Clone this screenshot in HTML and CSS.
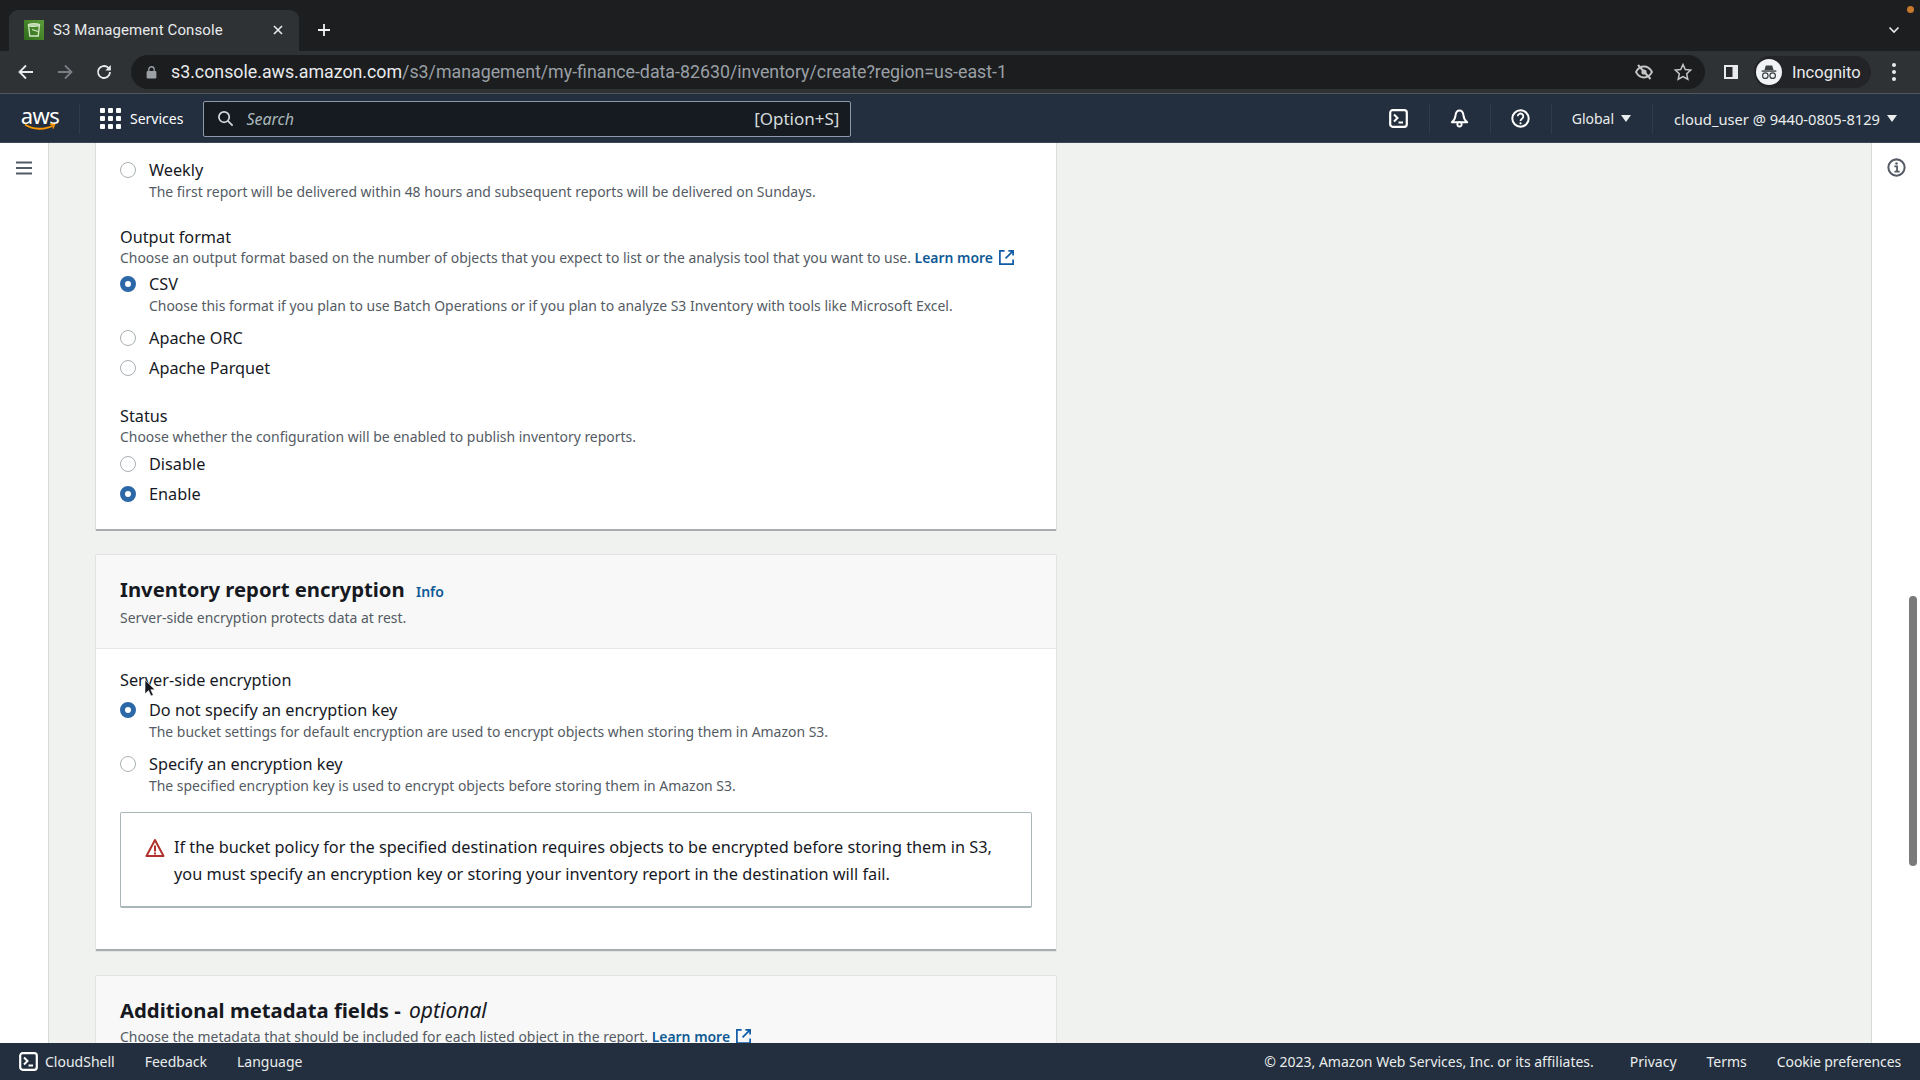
FILE: index.html
```html
<!DOCTYPE html>
<html lang="en">
<head>
<meta charset="utf-8">
<title>S3 Management Console</title>
<link rel="stylesheet" href="styles.css">
</head>
<body>
<div class="tabstrip">
  <div class="tab">
    <svg class="favicon" viewBox="0 0 20 20"><defs><linearGradient id="fav" x1="0" y1="1" x2="1" y2="0"><stop offset="0" stop-color="#2f6b1c"/><stop offset="1" stop-color="#5c9c38"/></linearGradient></defs><rect width="20" height="20" fill="url(#fav)"/><path d="M4.500 5h11l-1.300 11H5.800z" fill="none" stroke="#d5e8c6" stroke-width="1.300"/><ellipse cx="10" cy="5" rx="5.500" ry="1.400" fill="none" stroke="#d5e8c6" stroke-width="1.200"/><path d="M8 9.500l6 2" stroke="#d5e8c6" stroke-width="1.200"/></svg>
    <span class="tab-title">S3 Management Console</span>
    <svg class="tab-close" viewBox="0 0 12 12"><path d="M2 2l8 8M10 2l-8 8" stroke="#e8eaed" stroke-width="1.600"/></svg>
  </div>
  <svg class="new-tab" viewBox="0 0 14 14"><path d="M7 1v12M1 7h12" stroke="#f1f3f4" stroke-width="1.800"/></svg>
  <div class="spacer"></div>
  <svg class="tab-list" viewBox="0 0 12 8"><path d="M1.500 1.500L6 6l4.500-4.500" fill="none" stroke="#e8eaed" stroke-width="1.600"/></svg>
  <span class="rec-dot"></span>
</div>
<div class="toolbar">
  <svg class="nav-icon" viewBox="0 0 20 20"><path d="M17 10H4M10 3.500L3.500 10l6.500 6.500" fill="none" stroke="#e8eaed" stroke-width="1.800"/></svg>
  <svg class="nav-icon" viewBox="0 0 20 20"><path d="M3 10h13M10 3.500l6.500 6.500-6.500 6.500" fill="none" stroke="#7b7e82" stroke-width="1.800"/></svg>
  <svg class="nav-icon" viewBox="0 0 20 20"><path d="M16 10a6 6 0 1 1-1.800-4.300L16 7.500" fill="none" stroke="#e8eaed" stroke-width="1.800"/><path d="M16.800 3v5.500h-5.500z" fill="#e8eaed"/></svg>
  <div class="omnibox">
    <svg class="lock" viewBox="0 0 10 12"><rect x="0.500" y="4.500" width="9" height="7" rx="1" fill="#9aa0a6"/><path d="M2.500 5V3.200a2.500 2.500 0 0 1 5 0V5" fill="none" stroke="#9aa0a6" stroke-width="1.200"/></svg>
    <span class="url"><span class="url-host">s3.console.aws.amazon.com</span>/s3/management/my-finance-data-82630/inventory/create?region=us-east-1</span>
    <div class="spacer"></div>
    <svg class="omni-icon" viewBox="0 0 20 20"><path d="M2 10s3-5.500 8-5.500S18 10 18 10s-3 5.500-8 5.500S2 10 2 10z" fill="none" stroke="#c4c7c5" stroke-width="1.800"/><circle cx="10" cy="10" r="2.600" fill="#c4c7c5"/><path d="M4 3l12.500 14" stroke="#c4c7c5" stroke-width="2"/></svg>
    <svg class="omni-icon" viewBox="0 0 20 20"><path d="M10 2.500l2.300 5 5.400.6-4 3.700 1.100 5.400L10 14.500l-4.800 2.700 1.100-5.400-4-3.700 5.400-.6z" fill="none" stroke="#c4c7c5" stroke-width="1.500"/></svg>
  </div>
  <svg class="panel-icon" viewBox="0 0 16 16"><rect x="1" y="1" width="14" height="14" fill="#e8eaed"/><rect x="3" y="3" width="6.500" height="10" fill="#292a2d"/></svg>
  <div class="profile">
    <span class="avatar"><svg viewBox="0 0 24 24"><path d="M7 10l1.500-5h7L17 10z" fill="#3c4043"/><path d="M4 11h16" stroke="#3c4043" stroke-width="1.500"/><circle cx="8" cy="16" r="3" fill="none" stroke="#3c4043" stroke-width="1.300"/><circle cx="16" cy="16" r="3" fill="none" stroke="#3c4043" stroke-width="1.300"/></svg></span>
    <span class="profile-name">Incognito</span>
  </div>
  <div class="kebab"><i></i><i></i><i></i></div>
</div>
<header class="aws-header">
  <div class="aws-logo">
    <span class="aws-word">aws</span>
    <svg class="smile" viewBox="0 0 32 8"><path d="M1 1.500c8 5.500 20 5.500 28 1" fill="none" stroke="#ff9900" stroke-width="1.800"/><path d="M26 1l4.500.5-1.500 4" fill="none" stroke="#ff9900" stroke-width="1.400"/></svg>
  </div>
  <span class="hdr-sep logo-sep"></span>
  <div class="services">
    <div class="grid-icon"><i></i><i></i><i></i><i></i><i></i><i></i><i></i><i></i><i></i></div>
    <span>Services</span>
  </div>
  <div class="search">
    <svg class="search-icon" viewBox="0 0 18 18"><circle cx="7.500" cy="7.500" r="5.500" fill="none" stroke="#d5dbdb" stroke-width="1.800"/><path d="M11.500 11.500l5 5" stroke="#d5dbdb" stroke-width="1.800"/></svg>
    <span class="search-ph">Search</span>
    <div class="spacer"></div>
    <span class="search-key">[Option+S]</span>
  </div>
  <div class="spacer"></div>
  <div class="hdr-icon"><svg class="term" viewBox="0 0 19 19"><rect x="1.200" y="1.200" width="16.600" height="16.600" rx="2.500" fill="none" stroke="#fff" stroke-width="2.200"/><path d="M5 5.500l3.500 3.500L5 12.500M9.500 13.500h4.500" fill="none" stroke="#fff" stroke-width="2"/></svg></div>
  <span class="hdr-sep"></span>
  <div class="hdr-icon"><svg class="bell" viewBox="0 0 19 19"><path d="M9.500 1.500C7 1.500 5.800 4 5.500 6.500 5.200 9.500 4 11.500 1.800 13.200h15.400C15 11.500 13.800 9.500 13.500 6.500 13.200 4 12 1.500 9.500 1.500z" fill="none" stroke="#fff" stroke-width="2" stroke-linejoin="round"/><circle cx="9.500" cy="15.300" r="2.200" fill="none" stroke="#fff" stroke-width="1.800"/></svg></div>
  <span class="hdr-sep"></span>
  <div class="hdr-icon"><svg class="help" viewBox="0 0 19 19"><circle cx="9.500" cy="9.500" r="8.200" fill="none" stroke="#fff" stroke-width="2"/><path d="M6.700 7.300a2.800 2.800 0 1 1 4.300 2.400c-1 .7-1.500 1.200-1.500 2.300" fill="none" stroke="#fff" stroke-width="1.800"/><circle cx="9.500" cy="14.300" r="1.100" fill="#fff"/></svg></div>
  <span class="hdr-sep"></span>
  <div class="hdr-menu region"><span>Global</span><i class="caret"></i></div>
  <span class="hdr-sep"></span>
  <div class="hdr-menu account"><span>cloud_user @ 9440-0805-8129</span><i class="caret"></i></div>
</header>
<div class="app">
  <aside class="left-rail">
    <svg class="hamburger" viewBox="0 0 18 14"><path d="M1 1.500h16M1 7h16M1 12.500h16" stroke="#545b64" stroke-width="2"/></svg>
  </aside>
  <main class="main">
    <section class="card card-first">
      <div class="card-body">
        <div class="option">
          <span class="radio"></span>
          <div><div class="opt-label">Weekly</div><div class="opt-desc">The first report will be delivered within 48 hours and subsequent reports will be delivered on Sundays.</div></div>
        </div>
        <div class="field field-format">
          <div class="field-label">Output format</div>
          <div class="field-desc">Choose an output format based on the number of objects that you expect to list or the analysis tool that you want to use. <a class="link">Learn more</a><svg class="ext" viewBox="0 0 18 18"><path d="M7 2H2v14h14v-5M11 2h5v5M16 2L8 10" fill="none" stroke="#0f5aa5" stroke-width="1.800"/></svg></div>
          <div class="option opt-first"><span class="radio on"></span><div><div class="opt-label">CSV</div><div class="opt-desc">Choose this format if you plan to use Batch Operations or if you plan to analyze S3 Inventory with tools like Microsoft Excel.</div></div></div>
          <div class="option opt-gap"><span class="radio"></span><div class="opt-label">Apache ORC</div></div>
          <div class="option opt-tight"><span class="radio"></span><div class="opt-label">Apache Parquet</div></div>
        </div>
        <div class="field field-status">
          <div class="field-label">Status</div>
          <div class="field-desc">Choose whether the configuration will be enabled to publish inventory reports.</div>
          <div class="option opt-first2"><span class="radio"></span><div class="opt-label">Disable</div></div>
          <div class="option opt-tight"><span class="radio on"></span><div class="opt-label">Enable</div></div>
        </div>
      </div>
    </section>
    <section class="card">
      <div class="card-head">
        <h2 class="card-title">Inventory report encryption <a class="link info">Info</a></h2>
        <p class="card-desc">Server-side encryption protects data at rest.</p>
      </div>
      <div class="card-body card-body-enc">
        <div class="field-label">Server-side encryption</div>
        <div class="option opt-after-label"><span class="radio on"></span><div><div class="opt-label">Do not specify an encryption key</div><div class="opt-desc">The bucket settings for default encryption are used to encrypt objects when storing them in Amazon S3.</div></div></div>
        <div class="option opt-gap2"><span class="radio"></span><div><div class="opt-label">Specify an encryption key</div><div class="opt-desc">The specified encryption key is used to encrypt objects before storing them in Amazon S3.</div></div></div>
        <div class="alert">
          <svg class="warn" viewBox="0 0 20 20"><path d="M10 2L1.500 18h17z" fill="none" stroke="#b0312b" stroke-width="2" stroke-linejoin="round"/><path d="M10 7.500v6M10 14.500v2" stroke="#b0312b" stroke-width="2"/></svg>
          <p class="alert-text">If the bucket policy for the specified destination requires objects to be encrypted before storing them in S3, you must specify an encryption key or storing your inventory report in the destination will fail.</p>
        </div>
      </div>
    </section>
    <section class="card">
      <div class="card-head">
        <h2 class="card-title">Additional metadata fields - <em class="optional">optional</em></h2>
        <p class="card-desc card-desc-long">Choose the metadata that should be included for each listed object in the report. <a class="link">Learn more</a><svg class="ext" viewBox="0 0 18 18"><path d="M7 2H2v14h14v-5M11 2h5v5M16 2L8 10" fill="none" stroke="#0f5aa5" stroke-width="1.800"/></svg></p>
      </div>
    </section>
  </main>
  <aside class="right-rail">
    <svg class="info-icon" viewBox="0 0 18 18"><circle cx="9" cy="9" r="7.700" fill="none" stroke="#545b64" stroke-width="1.900"/><path d="M7 8h2.500v4.500M7 13h5" fill="none" stroke="#545b64" stroke-width="1.700"/><circle cx="9" cy="5.300" r="1.200" fill="#545b64"/></svg>
    <div class="scroll-thumb"></div>
  </aside>
</div>
<footer class="aws-footer">
  <svg class="term foot-term" viewBox="0 0 19 19"><rect x="1.200" y="1.200" width="16.600" height="16.600" rx="2.500" fill="none" stroke="#fff" stroke-width="2.200"/><path d="M5 5.500l3.500 3.500L5 12.500M9.500 13.500h4.500" fill="none" stroke="#fff" stroke-width="2"/></svg>
  <span class="foot-shell">CloudShell</span>
  <span class="foot-item">Feedback</span>
  <span class="foot-item">Language</span>
  <div class="spacer"></div>
  <span>© 2023, Amazon Web Services, Inc. or its affiliates.</span>
  <span class="foot-right foot-privacy">Privacy</span>
  <span class="foot-right">Terms</span>
  <span class="foot-right foot-cookie">Cookie preferences</span>
</footer>
<svg class="cursor" viewBox="0 0 12 18"><path d="M1 1v14l3.500-3.500 2.500 5.500 2.300-1-2.500-5.300H11z" fill="#16191f" stroke="#fff" stroke-width="0.600"/></svg>
</body>
</html>
```

FILE: styles.css
```css
* { box-sizing: border-box; }
html, body { margin: 0; height: 100%; overflow: hidden; }
body {
  width: 1920px; height: 1080px;
  display: flex; flex-direction: column;
  font-family: "Noto Sans", "Open Sans", sans-serif;
  color: #16191f;
  background: #f0f2f0;
  position: relative;
}
.spacer { flex: 1; }

/* Browser chrome */
.tabstrip {
  height: 51px; flex: none;
  background: #1d1e20;
  display: flex; align-items: flex-end;
  padding-left: 9px;
  position: relative;
}
.tab {
  width: 290px; height: 41px;
  background: #2f3234;
  border-radius: 9px 9px 0 0;
  display: flex; align-items: center;
  padding: 0 15px 2px 15px;
}
.favicon { width: 20px; height: 20px; flex: none; }
.tab-title { margin-left: 9px; font: 15px "Roboto", sans-serif; color: #e8eaed; letter-spacing: .1px; }
.tab-close { width: 12px; height: 12px; margin-left: auto; }
.new-tab { width: 14px; height: 14px; margin: 0 0 14px 18px; }
.tab-list { width: 12px; height: 8px; margin: 0 20px 17px 0; }
.rec-dot { position: absolute; top: 6px; right: 6px; width: 7px; height: 7px; border-radius: 50%; background: #c9792b; }
.toolbar {
  height: 43px; flex: none;
  background: #2f3234;
  border-bottom: 1px solid #55585a;
  display: flex; align-items: center;
  padding-left: 16px;
}
.nav-icon { width: 20px; height: 20px; margin-right: 19px; flex: none; }
.omnibox {
  width: 1574px; height: 34px;
  margin-left: -2px;
  background: #1c1d1f;
  border-radius: 17px;
  display: flex; align-items: center;
  padding: 0 12px 0 15px;
}
.lock { width: 11px; height: 13px; flex: none; }
.url { margin-left: 14px; padding-bottom: 1px; font: 17.800px "Roboto", sans-serif; color: #9aa0a6; white-space: nowrap; }
.url-host { color: #e8eaed; }
.omni-icon { width: 20px; height: 20px; margin-left: 19px; flex: none; }
.panel-icon { width: 16px; height: 16px; margin-left: 18px; flex: none; }
.profile {
  height: 32px; width: 117px;
  margin-left: 15px;
  background: #232427;
  border-radius: 16px;
  display: flex; align-items: center;
  padding-left: 2px;
}
.avatar { width: 26px; height: 26px; border-radius: 50%; background: #f1f3f4; display: flex; align-items: center; justify-content: center; }
.avatar svg { width: 22px; height: 22px; }
.profile-name { margin-left: 10px; font: 16.500px "Roboto", sans-serif; color: #e8eaed; }
.kebab { margin-left: 21px; display: flex; flex-direction: column; gap: 3px; }
.kebab i { width: 4px; height: 4px; border-radius: 50%; background: #e8eaed; display: block; }

/* AWS header */
.aws-header {
  height: 49px; flex: none;
  background: #232f3e;
  color: #fff;
  display: flex; align-items: center;
  padding: 1px 23px 0 21px;
  font-size: 14px;
  border-bottom: 1px solid #3c4654;
}
.aws-logo { width: 38px; display: flex; flex-direction: column; align-items: center; }
.aws-word { font: 22px/18px "Noto Sans", sans-serif; color: #fff; letter-spacing: -.5px; }
.smile { width: 32px; height: 8px; margin-top: -1px; }
.hdr-sep { width: 1px; height: 30px; background: #2f3b4b; flex: none; }
.logo-sep { margin-left: 20px; }
.services { display: flex; align-items: center; margin-left: 20px; gap: 9px; }
.grid-icon { display: grid; grid-template-columns: repeat(3, 5px); grid-auto-rows: 5px; gap: 3px; width: 21px; }
.grid-icon i { background: #fff; display: block; border-radius: 1px; }
.search {
  width: 648px; height: 36px;
  margin-left: 20px;
  background: #161b22;
  border: 1px solid #8d99a8;
  border-radius: 2px;
  display: flex; align-items: center;
  padding: 0 11px 0 13px;
}
.search-icon { width: 17px; height: 17px; flex: none; }
.search-ph { margin-left: 12px; font-style: italic; font-size: 16px; color: #aab7b8; }
.search-key { font-size: 17px; color: #d5dbdb; }
.hdr-icon { width: 60px; display: flex; justify-content: center; align-items: center; }
.term { width: 19px; height: 19px; flex: none; }
.bell, .help { width: 19px; height: 19px; }
.hdr-menu { display: flex; align-items: center; gap: 7px; color: #eaeded; }
.region { padding: 0 21px 0 20px; font-size: 14px; }
.account { padding-left: 21px; font-size: 14.700px; }
.caret { width: 0; height: 0; border-left: 5px solid transparent; border-right: 5px solid transparent; border-top: 7px solid #eaeded; display: block; }

/* App shell */
.app { flex: 1; min-height: 0; display: flex; overflow: hidden; }
.left-rail {
  width: 49px; flex: none;
  background: #fff;
  border-right: 1px solid #d5dbdb;
  padding: 18px 0 0 15px;
}
.hamburger { width: 18px; height: 14px; display: block; }
.main { flex: 1; min-width: 0; padding: 0 0 0 47px; overflow: hidden; }
.right-rail {
  width: 49px; flex: none;
  background: #fff;
  border-left: 1px solid #d5dbdb;
  position: relative;
  padding: 15px 0 0 15px;
}
.info-icon { width: 19px; height: 19px; display: block; }
.scroll-thumb {
  position: absolute; top: 453px; right: 3px;
  width: 8px; height: 270px;
  background: #7a7a7a; border-radius: 4px;
}

/* Cards */
.card {
  width: 960px;
  background: #fff;
  border-bottom: 2px solid #a9adb0;
  box-shadow: 0 0 1px rgba(0,28,36,.35);
  margin-bottom: 25px;
}
.card-first { box-shadow: -1px 0 0 #dcdedd, 1px 0 0 #dcdedd; margin-bottom: 24px; }
.card-body { padding: 16px 24px 0; }
.card-first .card-body { padding-bottom: 24px; }
.card-head {
  background: #f7f8f7;
  border-bottom: 1px solid #e6e9e8;
  padding: 20px 24px 19px;
}
.card-title { margin: 0; font-size: 20.300px; line-height: 28px; font-weight: 700; color: #16191f; }
.optional { font-weight: 400; font-style: italic; font-size: 21px; margin-left: 3px; }
.card-desc { margin: 1px 0 0; font-size: 13.950px; line-height: 22px; color: #545b64; }
.card-desc-long { margin-top: 2px; }
.link { color: #0f5a96; font-weight: 600; }
.info { font-size: 14px; margin-left: 6px; }
.ext { width: 17px; height: 17px; margin-left: 5px; vertical-align: -3px; }

.field-label { font-size: 16.250px; line-height: 22px; color: #16191f; }
.field-desc { font-size: 13.950px; line-height: 20px; color: #545b64; }
.field-format { margin-top: 24px; }
.field-status { margin-top: 26px; }
.option { display: flex; align-items: flex-start; gap: 13px; }
.radio {
  width: 16px; height: 16px; flex: none;
  margin-top: 3px;
  border-radius: 50%;
  background: #fff;
  border: 1.500px solid #a9afb3;
}
.radio.on { border: 5px solid #2c68a8; }
.opt-label { font-size: 16.250px; line-height: 22px; color: #16191f; }
.opt-desc { font-size: 13.950px; line-height: 20px; color: #545b64; margin-top: 1px; }
.opt-first { margin-top: 5px; }
.opt-gap { margin-top: 11px; }
.opt-tight { margin-top: 8px; }
.opt-first2 { margin-top: 6px; }
.card-body-enc { padding-top: 20px; padding-bottom: 41px; }
.opt-after-label { margin-top: 8px; }
.opt-gap2 { margin-top: 11px; }
.alert {
  margin-top: 16px;
  height: 96px;
  border: 1px solid #aab7b8;
  border-bottom-width: 2px;
  border-radius: 2px;
  display: flex; align-items: flex-start;
  padding: 21px 24px 0 24px;
  gap: 9px;
}
.warn { width: 20px; height: 20px; flex: none; margin-top: 4px; }
.alert-text { margin: 0; font-size: 16.300px; line-height: 26.600px; color: #16191f; }
.cursor { position: absolute; left: 144px; top: 679px; width: 12px; height: 18px; }

/* Footer */
.aws-footer {
  height: 37px; flex: none;
  background: #232f3e;
  color: #eaeded;
  font-size: 14px;
  display: flex; align-items: center;
  padding: 0 19px;
  z-index: 1;
}
.foot-term { margin-right: 7px; }
.foot-shell { margin-right: 30px; }
.foot-item { margin-right: 30px; }
.foot-right { margin-left: 30px; }
.foot-privacy { margin-left: 36px; }
.foot-cookie { letter-spacing: -.13px; }
```
